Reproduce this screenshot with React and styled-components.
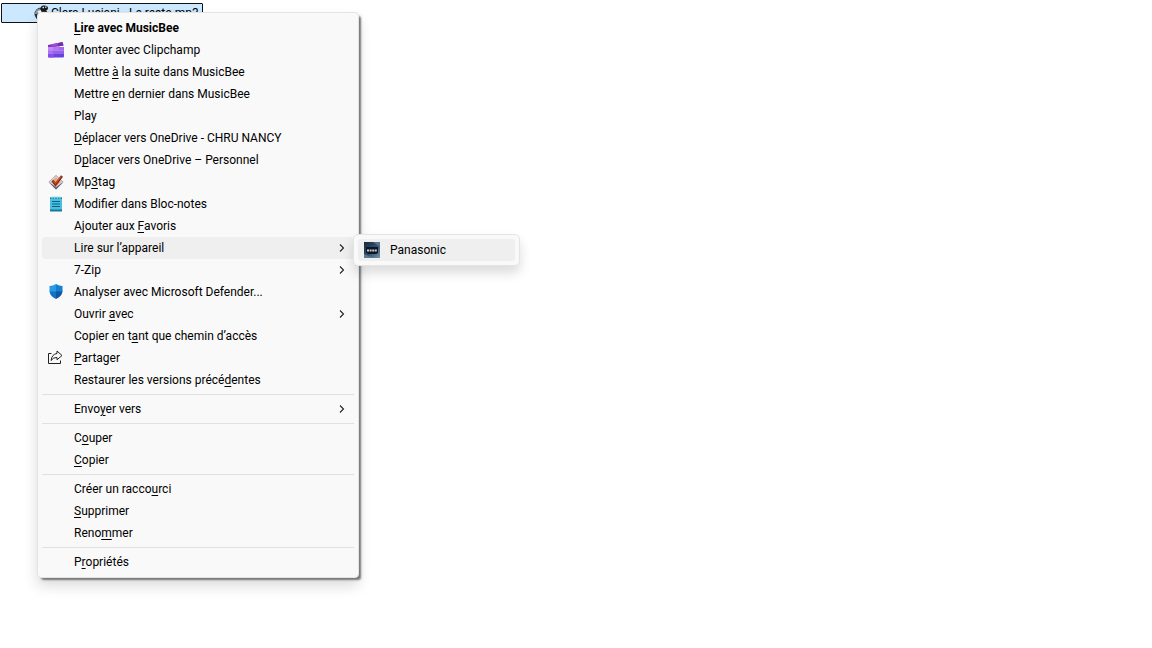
import { Fragment } from "react";
import styled, { createGlobalStyle } from "styled-components";

const GlobalStyle = createGlobalStyle`
  * {
    box-sizing: border-box;
  }

  body {
    margin: 0;
    min-height: 100vh;
    background: #fff;
    color: #000;
    font-family: Roboto, "Open Sans", sans-serif;
    font-size: 12px;
    line-height: 22px;
  }
`;

const Desktop = styled.main`
  position: relative;
  min-height: 100vh;
  padding: 3px 1px;
`;

const FileEntry = styled.button`
  display: flex;
  align-items: center;
  gap: 1px;
  width: 202px;
  height: 20px;
  padding: 0 0 0 32px;
  border: 1px solid #111;
  border-radius: 1px;
  background: #cce8ff;
  color: inherit;
  font: inherit;
  white-space: nowrap;
`;

const Panel = styled.ul`
  position: absolute;
  margin: 0;
  padding: 4px;
  border: 1px solid #e4e4e4;
  list-style: none;
  background: #f9f9f9;
`;

const Menu = styled(Panel)`
  top: 12px;
  left: 37px;
  width: 322px;
  border-radius: 4px;
  box-shadow: 3px 3px 2px -1px #777, 0 8px 14px rgba(0, 0, 0, 0.14);
`;

const SubMenu = styled(Panel)`
  top: -3px;
  left: calc(100% - 1px);
  width: 167px;
  border-radius: 5px;
  box-shadow: 0 7px 12px rgba(0, 0, 0, 0.14);
`;

const Item = styled.li`
  position: relative;
`;

const ItemButton = styled.button`
  display: flex;
  align-items: center;
  width: 100%;
  height: 22px;
  padding: 0 7px 0 6px;
  border: 0;
  border-radius: 3px;
  background: ${(props) => (props.$active ? "#efefef" : "transparent")};
  color: inherit;
  font: inherit;
  font-weight: ${(props) => (props.$bold ? 700 : 400)};
  text-align: left;
  white-space: nowrap;

  &:hover {
    background: #efefef;
  }

  u {
    text-underline-offset: 2px;
  }
`;

const IconSlot = styled.span`
  display: flex;
  width: 26px;
  flex: none;
`;

const Label = styled.span`
  flex: 1;
`;

const Separator = styled.li`
  height: 1px;
  margin: 3px 0;
  background: #e1e1e1;
`;

const Svg = styled.svg`
  display: block;
  width: 16px;
  height: 16px;
  flex: none;
`;

const Arrow = styled.svg`
  width: 10px;
  height: 10px;
  flex: none;
`;

function BeeIcon() {
  return (
    <Svg viewBox="0 0 16 16">
      <circle cx="7" cy="9" r="6.5" fill="#2b3036" />
      <path d="M1 9Q1 4 6 3.5L7 6 3 9Z" fill="#8d979f" />
      <path d="M3.5 6.5 6.5 5 8 7.5 5 9Z" fill="#f3f6f8" />
      <path d="M7 5Q6 1 9 0.5 14 0 14 3 14 6 9 6Z" fill="#17191c" />
      <path d="M8.5 2.5H10M11 2.2H12.5" stroke="#dceaf4" strokeWidth="1.3" />
    </Svg>
  );
}

function ClipchampIcon() {
  return (
    <Svg viewBox="0 0 16 16">
      <path d="M0 3 14.5 0 15.5 3.5 4 5.5H0Z" fill="#8237b5" />
      <path d="M5 2 10 1 8 4.8H3Z" fill="#a04bd3" />
      <path d="M11.5 0.7 14.5 0 15.5 3.5 10 4.5Z" fill="#7130a5" />
      <path d="M0 5H16V8.5H0Z" fill="#c28bf7" />
      <path d="M5 5H11V8.5H5Z" fill="#b478f4" />
      <path d="M11 5H16V8.5H11Z" fill="#a269ee" />
      <path d="M0 8.5H16V12H0Z" fill="#9660ef" />
      <path d="M0 8.5H5V12H0Z" fill="#ad70f2" />
      <path d="M0 12H16V14.5Q16 15.5 15 15.5H1Q0 15.5 0 14.5Z" fill="#6842dc" />
      <path d="M0 12H6V15.5H1Q0 15.5 0 14.5Z" fill="#8350e6" />
    </Svg>
  );
}

function Mp3tagIcon() {
  return (
    <Svg viewBox="0 0 16 16">
      <path d="M0.5 8 8 1 15.5 8 8 15.5Z" fill="#8f8da4" />
      <path d="M1 8 8 1.8 14.8 8 8 13Z" fill="#d9d5df" />
      <path d="M3 8 8 3.5 13 8 8 12Z" fill="#f1a36e" />
      <path d="M1 8.5 8 13.5 15 8.5 8 15.5Z" fill="#626078" />
      <path d="M4.5 6.5 7.5 10.5 14 2" fill="none" stroke="#8e2d17" strokeWidth="2.6" />
      <path d="M5 6.5 7.5 9.5 13 2.5" fill="none" stroke="#d85c2c" strokeWidth="1" />
    </Svg>
  );
}

function NotepadIcon() {
  return (
    <Svg viewBox="0 0 16 16">
      <path d="M2 1.5H14V14H2Z" fill="#48c0e2" />
      <path d="M2 13.5H14V15.5H2Z" fill="#16789d" />
      <path d="M2 1.5H14V3H2Z" fill="#1684ad" />
      <path d="M4 0V3M6.7 0V3M9.3 0V3M12 0V3" stroke="#8adcf1" strokeWidth="1" />
      <path d="M4 5.5H12M4 8H12M4 10.5H12" stroke="#125c7c" strokeWidth="1.2" />
    </Svg>
  );
}

function DefenderIcon() {
  return (
    <Svg viewBox="0 0 16 16">
      <path d="M8 0Q5 2 1.5 2V8H8Z" fill="#279be5" />
      <path d="M8 0Q11 2 14.5 2V8H8Z" fill="#1680d0" />
      <path d="M1.5 7.5H8V15Q2 12 1.5 7.5Z" fill="#1272c4" />
      <path d="M8 7.5H14.5Q14 12 8 15Z" fill="#1156a0" />
    </Svg>
  );
}

function ShareIcon() {
  return (
    <Svg viewBox="0 0 16 16" fill="none" stroke="#222" strokeLinejoin="round">
      <path d="M3.5 3.5H0.5V13.5H12.5V10.5" />
      <path d="M9 1 14 5.5 9 9.8V7.5Q5.5 7 3 10.5 4 4 9 3.5Z" />
    </Svg>
  );
}

function DeviceIcon() {
  return (
    <Svg viewBox="0 0 16 16">
      <defs>
        <linearGradient id="device" x1="0" y1="0" x2="1" y2="1">
          <stop offset="0" stopColor="#16283a" />
          <stop offset="0.5" stopColor="#304d68" />
          <stop offset="1" stopColor="#7892ab" />
        </linearGradient>
      </defs>
      <path d="M0 0H16V16H0Z" fill="url(#device)" />
      <path d="M9 0H16V5Z" fill="#56728d" />
      <path d="M0 12 9 16H0Z" fill="#5c7a96" />
      <path d="M2 5H14V11L12 12H4L2 10Z" fill="#0c1521" />
      <path d="M3 8.5H13" stroke="#c3ced8" strokeWidth="2" strokeDasharray="2 0.6" />
    </Svg>
  );
}

// An underscore comes before the access key of each label.
const groups = [
  [
    { label: "_Lire avec MusicBee", bold: true },
    { label: "Monter avec Clipchamp", icon: ClipchampIcon },
    { label: "Mettre _à la suite dans MusicBee" },
    { label: "Mettre _en dernier dans MusicBee" },
    { label: "Play" },
    { label: "_Déplacer vers OneDrive - CHRU NANCY" },
    { label: "D_placer vers OneDrive – Personnel" },
    { label: "Mp_3tag", icon: Mp3tagIcon },
    { label: "Modifier dans Bloc-notes", icon: NotepadIcon },
    { label: "Ajouter aux _Favoris" },
    {
      label: "Lire sur l’appareil",
      arrow: true,
      active: true,
      children: [{ label: "Panasonic", icon: DeviceIcon, active: true }],
    },
    { label: "7-Zip", arrow: true },
    { label: "Analyser avec Microsoft Defender...", icon: DefenderIcon },
    { label: "Ouvrir _avec", arrow: true },
    { label: "Copier en t_ant que chemin d’accès" },
    { label: "_Partager", icon: ShareIcon },
    { label: "Restaurer les versions précé_dentes" },
  ],
  [{ label: "Envo_yer vers", arrow: true }],
  [{ label: "C_ouper" }, { label: "_Copier" }],
  [
    { label: "Créer un racco_urci" },
    { label: "_Supprimer" },
    { label: "Reno_mmer" },
  ],
  [{ label: "P_ropriétés" }],
];

function AccessLabel({ text }) {
  const at = text.indexOf("_");
  if (at < 0) return <Label>{text}</Label>;
  return (
    <Label>
      {text.slice(0, at)}
      <u>{text[at + 1]}</u>
      {text.slice(at + 2)}
    </Label>
  );
}

function MenuItem({ item }) {
  const Icon = item.icon;
  return (
    <Item role="none">
      <ItemButton
        type="button"
        role="menuitem"
        aria-haspopup={item.arrow ? "menu" : undefined}
        $active={item.active}
        $bold={item.bold}
      >
        <IconSlot>{Icon && <Icon />}</IconSlot>
        <AccessLabel text={item.label} />
        {item.arrow && (
          <Arrow viewBox="0 0 10 10" fill="none" stroke="#222" strokeWidth="1.1">
            <path d="M3 1.5 6.5 5 3 8.5" />
          </Arrow>
        )}
      </ItemButton>
      {item.children && (
        <SubMenu role="menu">
          {item.children.map((child) => (
            <MenuItem key={child.label} item={child} />
          ))}
        </SubMenu>
      )}
    </Item>
  );
}

export default function App() {
  return (
    <>
      <GlobalStyle />
      <Desktop>
        <FileEntry type="button">
          <BeeIcon />
          Clara Luciani - Le reste.mp3
        </FileEntry>
        <Menu role="menu">
          {groups.map((group, index) => (
            <Fragment key={index}>
              {index > 0 && <Separator role="separator" />}
              {group.map((item) => (
                <MenuItem key={item.label} item={item} />
              ))}
            </Fragment>
          ))}
        </Menu>
      </Desktop>
    </>
  );
}
